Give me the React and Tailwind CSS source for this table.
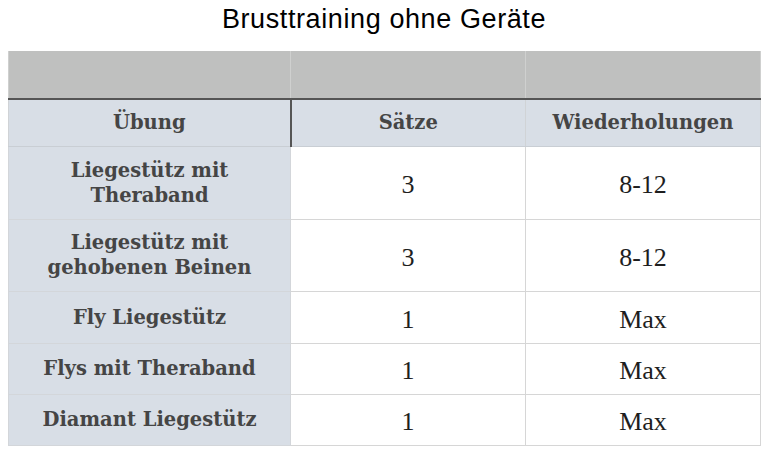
const rows = [
  { name: ["Liegestütz mit", "Theraband"], sets: "3", reps: "8-12", h: "h-[73px]" },
  { name: ["Liegestütz mit", "gehobenen Beinen"], sets: "3", reps: "8-12", h: "h-[72px]" },
  { name: ["Fly Liegestütz"], sets: "1", reps: "Max", h: "h-[52px]" },
  { name: ["Flys mit Theraband"], sets: "1", reps: "Max", h: "h-[51px]" },
  { name: ["Diamant Liegestütz"], sets: "1", reps: "Max", h: "h-[51px]" },
];

const bold = "font-['DejaVu_Serif',serif] font-bold text-[19.5px] leading-[25px] text-[#454545]";
const plain = "font-['Liberation_Serif',serif] text-[26px] pt-[4px] text-[#1e1e1e]";

export default function App() {
  return (
    <div className="w-[768px] h-[452px] bg-white">
      <div className="h-[51px] pt-[4px] text-center font-['Liberation_Sans',Arial,sans-serif] text-[27px] leading-[31px] tracking-[0.6px] text-black">
        Brusttraining ohne Geräte
      </div>

      <table className="ml-[8px] w-[752px] table-fixed border-collapse">
        <colgroup>
          <col className="w-[282px]" />
          <col className="w-[235px]" />
          <col className="w-[235px]" />
        </colgroup>
        <thead>
          <tr className="h-[48px] bg-[#bfc0bf]">
            <th className="border-x border-[#cfd0cf] border-b-2 border-b-[#555555]"></th>
            <th className="border-x border-[#cfd0cf] border-b-2 border-b-[#555555]"></th>
            <th className="border-x border-[#cfd0cf] border-b-2 border-b-[#555555]"></th>
          </tr>
          <tr className="h-[47px] bg-[#d8dee6]">
            <th className={`border-l border-[#d0d3d6] border-r-2 border-r-[#555555] border-b border-b-[#c9ced4] ${bold}`}>
              Übung
            </th>
            <th className={`border-x border-[#d0d3d6] border-b border-b-[#c9ced4] ${bold}`}>Sätze</th>
            <th className={`border-x border-[#d0d3d6] border-b border-b-[#c9ced4] ${bold}`}>Wiederholungen</th>
          </tr>
        </thead>
        <tbody>
          {rows.map((r, i) => (
            <tr key={i} className={r.h}>
              <td className={`bg-[#d8dee6] border border-[#d3d6da] text-center ${bold}`}>
                {r.name.map((line, j) => (
                  <div key={j}>{line}</div>
                ))}
              </td>
              <td className={`border border-[#d6d6d6] text-center ${plain}`}>{r.sets}</td>
              <td className={`border border-[#d6d6d6] text-center ${plain}`}>{r.reps}</td>
            </tr>
          ))}
        </tbody>
      </table>
    </div>
  );
}
